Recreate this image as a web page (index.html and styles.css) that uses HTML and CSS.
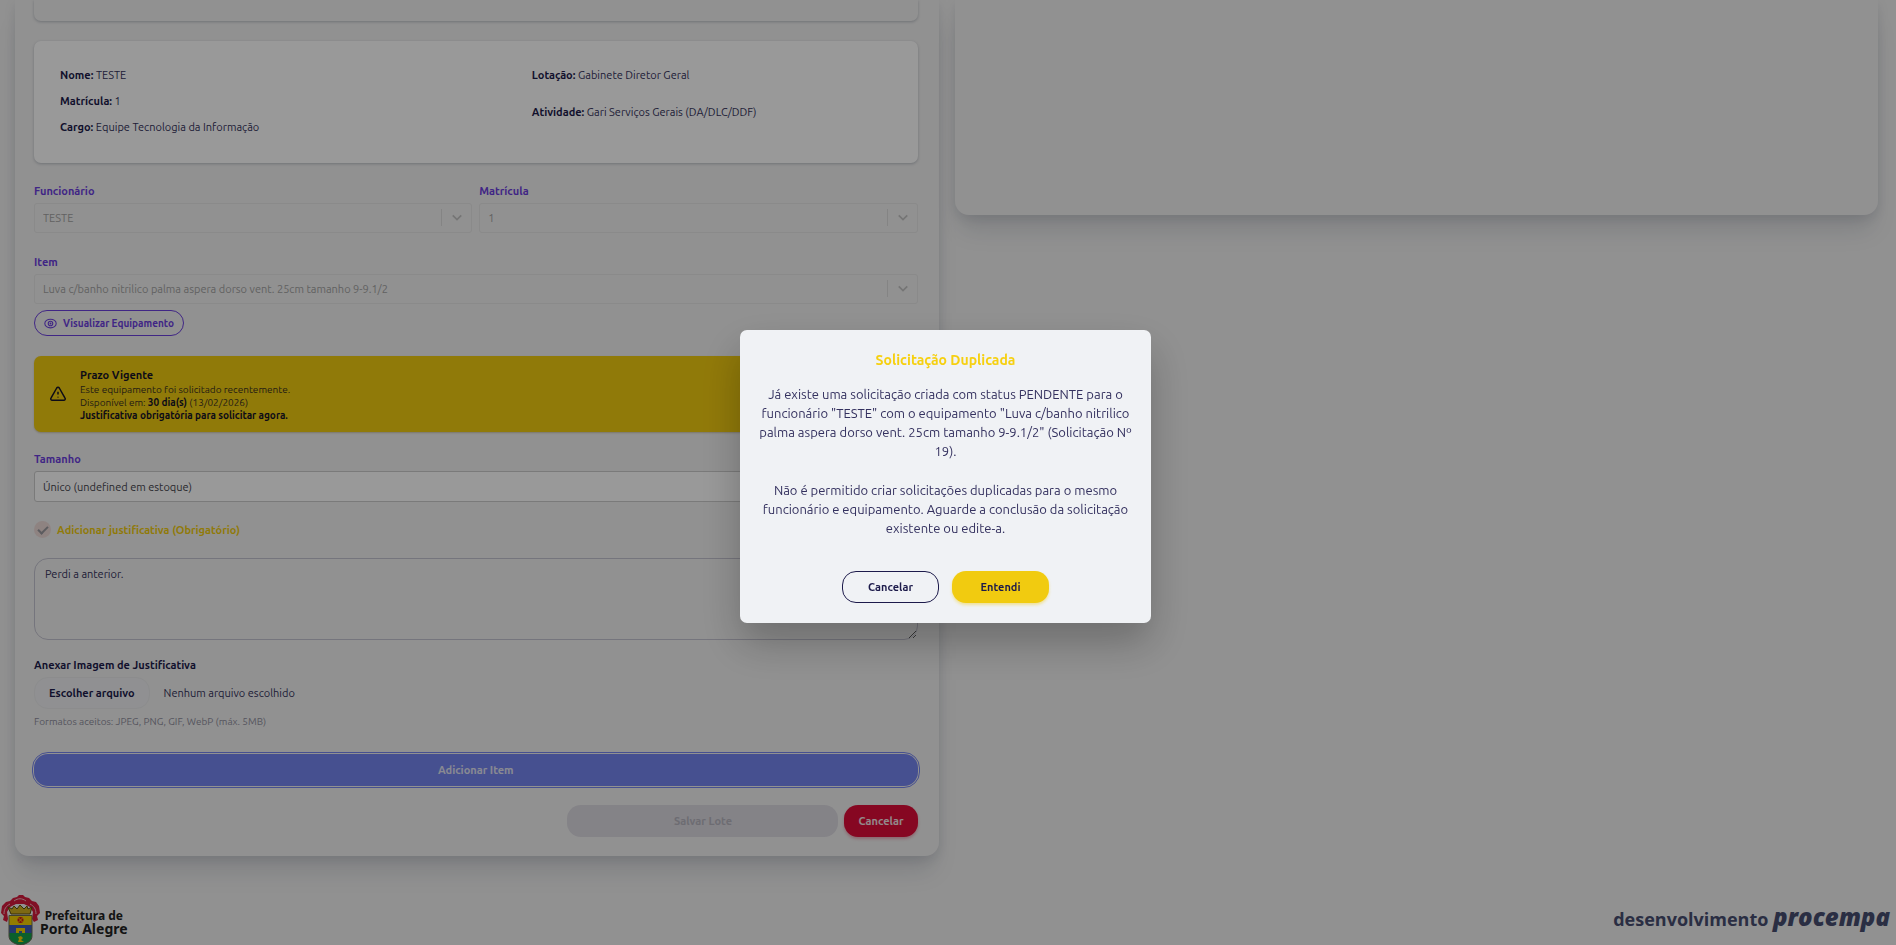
FILE: index.html
```
<!DOCTYPE html>
<html lang="pt-BR">

<head>
    <meta charset="UTF-8">
    <meta name="viewport" content="width=device-width, initial-scale=1.0">
    <title>Solicitação de Equipamentos</title>
    <link rel="stylesheet" href="styles.css">
</head>

<body>
    <main class="page">
        <section class="panel">
            <div class="card card-top"></div>

            <div class="card employee">
                <div class="employee-col">
                    <p><strong>Nome:</strong> TESTE</p>
                    <p><strong>Matrícula:</strong> 1</p>
                    <p><strong>Cargo:</strong> Equipe Tecnologia da Informação</p>
                </div>
                <div class="employee-col employee-col-wide">
                    <p><strong>Lotação:</strong> Gabinete Diretor Geral</p>
                    <p><strong>Atividade:</strong> Gari Serviços Gerais (DA/DLC/DDF)</p>
                </div>
            </div>

            <form class="form">
                <div class="row">
                    <div class="field">
                        <label for="funcionario">Funcionário</label>
                        <div class="select">
                            <select id="funcionario" disabled>
                                <option>TESTE</option>
                            </select>
                            <svg class="chevron" viewBox="0 0 20 20"><path d="M5 7.5l5 5 5-5" /></svg>
                        </div>
                    </div>
                    <div class="field">
                        <label for="matricula">Matrícula</label>
                        <div class="select">
                            <select id="matricula" disabled>
                                <option>1</option>
                            </select>
                            <svg class="chevron" viewBox="0 0 20 20"><path d="M5 7.5l5 5 5-5" /></svg>
                        </div>
                    </div>
                </div>

                <div class="field field-item">
                    <label for="item">Item</label>
                    <div class="select">
                        <select id="item" disabled>
                            <option>Luva c/banho nitrilico palma aspera dorso vent. 25cm tamanho 9-9.1/2</option>
                        </select>
                        <svg class="chevron" viewBox="0 0 20 20"><path d="M5 7.5l5 5 5-5" /></svg>
                    </div>
                </div>

                <button type="button" class="btn btn-view">
                    <svg class="eye" viewBox="0 0 24 24">
                        <ellipse cx="12" cy="12" rx="10.5" ry="8" />
                        <circle cx="12" cy="12" r="4.2" />
                        <circle cx="12" cy="12" r="0.8" />
                    </svg>
                    Visualizar Equipamento
                </button>

                <div class="alert">
                    <svg class="warning" viewBox="0 0 24 24">
                        <path d="M12 9v3.5m0 3.2v1M10.3 4L2.6 17.4A1.9 1.9 0 0 0 4.3 20.3h15.4a1.9 1.9 0 0 0 1.7-2.9L13.7 4a2 2 0 0 0-3.400 0z" />
                    </svg>
                    <div class="alert-text">
                        <h3>Prazo Vigente</h3>
                        <p>Este equipamento foi solicitado recentemente.</p>
                        <p>Disponível em: <strong>30 dia(s)</strong> (13/02/2026)</p>
                        <p><strong>Justificativa obrigatória para solicitar agora.</strong></p>
                    </div>
                </div>

                <div class="field field-size">
                    <label for="tamanho">Tamanho</label>
                    <div class="select">
                        <select id="tamanho">
                            <option>Único (undefined em estoque)</option>
                        </select>
                        <svg class="chevron" viewBox="0 0 20 20"><path d="M5 7.5l5 5 5-5" /></svg>
                    </div>
                </div>

                <div class="check">
                    <input type="checkbox" id="justificar" checked disabled>
                    <label for="justificar">Adicionar justificativa (Obrigatório)</label>
                </div>

                <textarea class="reason" aria-label="Justificativa">Perdi a anterior.</textarea>

                <div class="upload">
                    <span class="upload-title">Anexar Imagem de Justificativa</span>
                    <div class="upload-row">
                        <input type="file" id="imagem" class="file-input">
                        <label for="imagem" class="file-btn">Escolher arquivo</label>
                        <span>Nenhum arquivo escolhido</span>
                    </div>
                    <p class="hint">Formatos aceitos: JPEG, PNG, GIF, WebP (máx. 5MB)</p>
                </div>

                <button type="button" class="btn btn-add">Adicionar Item</button>

                <div class="actions">
                    <button type="button" class="btn btn-save" disabled>Salvar Lote</button>
                    <button type="button" class="btn btn-cancel">Cancelar</button>
                </div>
            </form>
        </section>

        <section class="panel panel-side"></section>
    </main>

    <footer class="footer">
        <div class="city">
            <svg class="crest" viewBox="0 0 40 50">
                <path class="ribbon" d="M7 27l-4-2 1-4-3-3 1-7 4-4 4-1 3-3 4-1 2-2h4l2 2 4 1 3 3 4 1 3 4 1 7-3 3 1 4-4 2-2-3 1-7-3-5-6-3H16l-6 3-3 5 1 7z" />
                <path class="ribbon-line" d="M4 19c0-5 2-8 6-10M36 19c0-5-2-8-6-10M14 6c4-3 8-3 12 0" />
                <path class="crown" d="M11 19L8 12l4 2 2-3 3 3 3-4 4 4 3-3 1 3 4-2-2 7z" />
                <path class="shield-gold" d="M9 21h23v9H9z" />
                <circle class="cross" cx="20.5" cy="25" r="3" />
                <path class="cross-line" d="M18.5 23l4 4m0-4l-4 4" />
                <path class="shield-blue" d="M9 30h23v8H9z" />
                <path class="gate" d="M16 38v-5h9v5h-3v-2h-3v2z" />
                <path class="shield-green" d="M9 38h23v3c0 5-5 8-11.5 9C14 49 9 46 9 41z" />
                <path class="gate" d="M18 42l3-1 2 2-2 2 3 2h-6l1-3z" />
                <path class="shield-line" d="M9 20.5h23V41c0 5-5 8-11.5 9C14 49 9 46 9 41z" />
            </svg>
            <div class="city-name">
                <span class="city-type">Prefeitura de</span>
                <span>Porto Alegre</span>
            </div>
        </div>
        <div class="credit">desenvolvimento <em>procempa</em></div>
    </footer>

    <div class="overlay">
        <div class="modal" role="dialog" aria-labelledby="modal-title">
            <h2 id="modal-title">Solicitação Duplicada</h2>
            <p>Já existe uma solicitação criada com status PENDENTE para o funcionário "TESTE" com o equipamento "Luva c/banho nitrilico palma aspera dorso vent. 25cm tamanho 9-9.1/2" (Solicitação Nº 19).</p>
            <p>Não é permitido criar solicitações duplicadas para o mesmo funcionário e equipamento. Aguarde a conclusão da solicitação existente ou edite-a.</p>
            <div class="modal-actions">
                <button type="button" class="btn btn-outline">Cancelar</button>
                <button type="button" class="btn btn-warning">Entendi</button>
            </div>
        </div>
    </div>
</body>

</html>
```
FILE: styles.css
```
* {
    box-sizing: border-box;
}

body {
    margin: 0;
    background-color: #f2f2f2;
    color: #35335c;
    font-family: Ubuntu, "Noto Sans", sans-serif;
    font-size: 11px;
    line-height: 16px;
    overflow: hidden;
}

h2,
h3,
p {
    margin: 0;
}

button,
select,
textarea {
    font-family: inherit;
    font-size: inherit;
}

.page {
    display: grid;
    grid-template-columns: 1fr 1fr;
    align-items: start;
    gap: 16px;
    padding: 0 18px 0 15px;
}

.panel {
    padding: 0 21px 19px 19px;
    background-color: #f2f2f2;
    border-radius: 0 0 14px 14px;
    box-shadow: 0 20px 25px -5px rgba(20, 30, 60, 0.12), 0 4px 12px rgba(20, 30, 60, 0.1);
}

.panel-side {
    height: 215px;
}

.card {
    border-radius: 7px;
    box-shadow: 0 1px 3px rgba(20, 30, 60, 0.25);
}

.card-top {
    height: 21px;
    margin-bottom: 20px;
    border-radius: 0 0 7px 7px;
}

.employee {
    display: flex;
    padding: 26px;
    background-color: white;
    min-height: 122px;
}

.employee-col {
    display: flex;
    flex: 1 1 50%;
    flex-direction: column;
    gap: 10px;
}

.employee-col-wide {
    gap: 21px;
    padding-left: 56px;
}

.employee strong {
    color: #1d1b4b;
}

.form {
    display: flex;
    flex-direction: column;
    padding-top: 20px;
}

.row {
    display: grid;
    grid-template-columns: 1fr 1fr;
    gap: 7px;
}

.field label {
    display: block;
    margin-bottom: 4px;
    color: #6c40de;
    font-weight: bold;
}

.field-item {
    margin-top: 21px;
}

.field-size {
    margin-top: 19px;
}

.select {
    position: relative;
}

.select select {
    display: block;
    width: 100%;
    height: 31px;
    padding: 0 8px;
    border: 1px solid #cccccc;
    border-radius: 3px;
    background-color: white;
    color: #45454d;
    appearance: none;
}

.select select:disabled {
    height: 30px;
    border-color: #e6e6e6;
    background-color: #f2f2f2;
    color: #a3a3a3;
    opacity: 1;
}

.chevron {
    position: absolute;
    top: 6px;
    right: 0;
    width: 31px;
    height: 17px;
    border-left: 1px solid #dddddd;
    fill: none;
    stroke: #c4c4c4;
    stroke-width: 2;
}

.btn {
    display: inline-flex;
    align-items: center;
    justify-content: center;
    height: 32px;
    border: 1px solid transparent;
    border-radius: 14px;
    font-weight: bold;
    cursor: pointer;
}

.btn-view {
    align-self: flex-start;
    gap: 6px;
    height: 26px;
    margin-top: 6px;
    padding: 0 9px;
    border-color: #6c40de;
    background-color: transparent;
    color: #6c40de;
    font-size: 10px;
}

.eye {
    width: 13px;
    height: 13px;
    fill: none;
    stroke: #6c40de;
    stroke-width: 2;
}

.alert {
    display: flex;
    align-items: center;
    gap: 13px;
    min-height: 76px;
    margin-top: 20px;
    padding: 10px 15px;
    border-radius: 7px;
    background-color: #f1cb10;
    box-shadow: 0 1px 2px rgba(120, 90, 0, 0.3);
    color: #3a3220;
    font-size: 10px;
    line-height: 13px;
}

.alert h3 {
    font-size: 11px;
    line-height: 16px;
}

.alert h3,
.alert strong {
    color: #151327;
}

.warning {
    width: 18px;
    height: 18px;
    fill: none;
    stroke: #151327;
    stroke-width: 2;
    stroke-linejoin: round;
}

.check {
    display: flex;
    align-items: center;
    gap: 6px;
    margin-top: 19px;
    color: #f1cb10;
    font-weight: bold;
}

.check input {
    width: 17px;
    height: 17px;
    margin: 0;
    border-radius: 50%;
    background-color: #eddad8;
    appearance: none;
}

.check input::before {
    content: "";
    display: block;
    width: 8px;
    height: 4px;
    margin: 5px 0 0 4px;
    border: solid #9a9a9f;
    border-width: 0 0 2px 2px;
    transform: rotate(-45deg);
}

.reason {
    width: 100%;
    height: 82px;
    margin-top: 20px;
    padding: 7px 10px;
    border: 1px solid #c4c3d0;
    border-radius: 14px;
    background-color: transparent;
    color: #35335c;
    line-height: 16px;
}

.upload {
    margin-top: 17px;
}

.upload-title,
.file-btn {
    color: #1d1b4b;
    font-weight: bold;
}

.upload-row {
    display: flex;
    align-items: center;
    gap: 14px;
    margin-top: 4px;
}

/* the styled label opens the file dialog */
.file-input {
    position: absolute;
    width: 1px;
    height: 1px;
    opacity: 0;
}

.file-btn {
    padding: 7px 14px;
    border: 1px solid #e9eaec;
    border-radius: 14px;
    background-color: #f0f1f3;
    cursor: pointer;
}

.hint {
    margin-top: 5px;
    color: #8e8d9c;
    font-size: 10px;
}

.btn-add {
    width: 100%;
    margin-top: 24px;
    background-color: #7685f0;
    color: #e4e6f4;
    outline: 1px solid #7685f0;
    outline-offset: 1px;
}

.actions {
    display: flex;
    justify-content: flex-end;
    gap: 6px;
    margin-top: 19px;
}

.btn-save {
    width: 271px;
    background-color: #dcdae1;
    color: #b6b5bf;
}

.btn-cancel {
    padding: 0 13px;
    background-color: #df0d39;
    box-shadow: 0 2px 3px rgba(223, 13, 57, 0.3);
    color: #f5e4e8;
}

.footer {
    display: flex;
    align-items: center;
    justify-content: space-between;
    height: 50px;
    margin-top: 39px;
    padding-right: 6px;
}

.city {
    display: flex;
    align-items: center;
    color: #222222;
    font-family: "Noto Sans", sans-serif;
    font-size: 14px;
    font-weight: bold;
    line-height: 13px;
}

.city-name {
    display: flex;
    flex-direction: column;
    align-items: center;
    padding-top: 4px;
}

.city-type {
    font-size: 12px;
}

.crest {
    width: 40px;
    height: 50px;
}

.ribbon {
    fill: #d51a3c;
}

.ribbon-line {
    fill: none;
    stroke: #f0b8c0;
}

.crown {
    fill: #d0b020;
    stroke: #5a4a10;
}

.shield-gold,
.gate {
    fill: #f5d000;
}

.cross {
    fill: #d51a1a;
}

.cross-line {
    stroke: #f5d000;
}

.shield-blue {
    fill: #3d5cb8;
}

.shield-green {
    fill: #12a04a;
}

.shield-line {
    fill: none;
    stroke: #6b6b55;
}

.credit {
    padding-bottom: 4px;
    color: #474d70;
    font-family: "Open Sans", sans-serif;
    font-size: 18px;
    font-weight: bold;
}

.credit em {
    font-size: 24px;
    font-weight: 800;
}

.overlay {
    position: fixed;
    inset: 0;
    display: flex;
    align-items: center;
    justify-content: center;
    padding: 8px 5px 0 0;
    background-color: rgba(0, 0, 0, 0.4);
}

.modal {
    width: 411px;
    padding: 20px 16px;
    border-radius: 7px;
    background-color: #f0f2f5;
    box-shadow: 0 20px 40px rgba(0, 0, 0, 0.25);
    color: #34315f;
    font-size: 13px;
    line-height: 19px;
    text-align: center;
}

.modal h2 {
    margin-bottom: 15px;
    color: #f6d010;
    font-size: 14px;
    line-height: 20px;
}

.modal p + p {
    margin-top: 20px;
}

.modal-actions {
    display: flex;
    justify-content: center;
    gap: 13px;
    margin-top: 33px;
}

.modal .btn {
    width: 97px;
    color: #1d1b4b;
    font-size: 11px;
}

.btn-outline {
    border-color: #1d1b4b;
    background-color: transparent;
}

.btn-warning {
    background-color: #f1cb10;
    box-shadow: 0 2px 3px rgba(241, 203, 16, 0.4);
}
```
